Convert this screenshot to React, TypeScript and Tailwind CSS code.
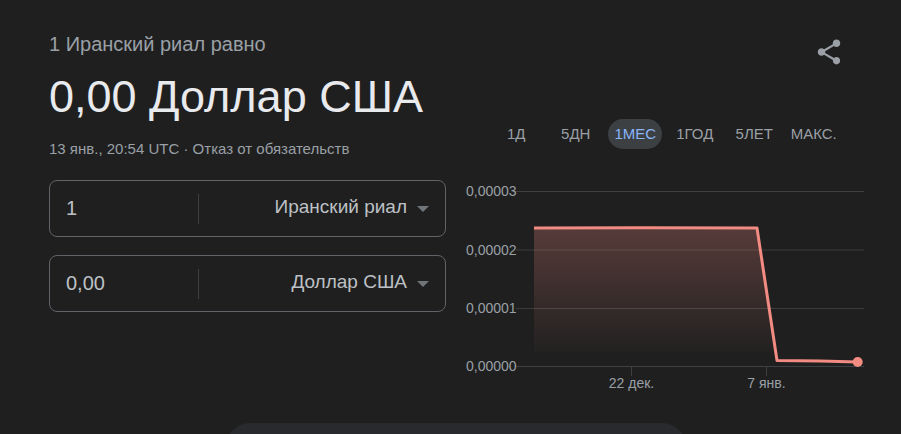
export default function App() {
  const tabs = ["1Д", "5ДН", "1МЕС", "1ГОД", "5ЛЕТ", "МАКС."];
  const yLabels = [
    { y: 191.5, t: "0,00003", c: "#3c4043" },
    { y: 250, t: "0,00002", c: "#3c3c3c" },
    { y: 308.5, t: "0,00001", c: "#3c3c3c" },
    { y: 366.5, t: "0,00000", c: "#3c4043" },
  ];
  const rows = [
    { v: "1", c: "Иранский риал" },
    { v: "0,00", c: "Доллар США" },
  ];
  return (
    <div className="w-[901px] h-[434px] overflow-hidden bg-[#1f1f1f] font-['Liberation_Sans',Arial,sans-serif]">
      <div className="h-[423px] flex">
        <div className="w-[446px] pl-[49px] pt-[33px] shrink-0">
          <div className="text-[20px] leading-[22px] text-[#9aa0a6]">1 Иранский риал равно</div>
          <div className="mt-[16px] text-[45px] leading-[52px] text-[#e8eaed]">0,00 Доллар США</div>
          <div className="mt-[16px] text-[15px] leading-[20px] text-[#9aa0a6]">13 янв., 20:54 UTC · Отказ от обязательств</div>
          <div className="mt-[21px] flex flex-col gap-[18px]">
            {rows.map((r) => (
              <div key={r.c} className="h-[57px] border border-[#5f6368] rounded-[8px] flex items-center">
                <div className="w-[149px] h-[30px] border-r border-[#3c4043] pl-[16px] text-[20px] leading-[28px] text-[#bdc1c6]">{r.v}</div>
                <div className="flex-1 flex items-center justify-end text-[19px] text-[#bdc1c6]">
                  <span className="-mt-[2px]">{r.c}</span>
                  <span className="ml-[10px] mr-[16px] w-0 h-0 border-x-[6.5px] border-x-transparent border-t-[6.5px] border-t-[#70757a]" />
                </div>
              </div>
            ))}
          </div>
        </div>
        <div className="flex-1 flex flex-col">
          <div className="h-[119px] relative">
            <svg className="absolute left-[368px] top-[37px] w-[30px] h-[30px]" viewBox="0 0 24 24" fill="#9aa0a6">
              <path d="M18 16.08c-.76 0-1.44.3-1.96.77L8.91 12.7c.05-.23.09-.46.09-.7s-.04-.47-.09-.7l7.05-4.11c.54.5 1.25.81 2.04.81 1.66 0 3-1.34 3-3s-1.34-3-3-3-3 1.34-3 3c0 .24.04.47.09.7L8.04 9.81C7.5 9.31 6.79 9 6 9c-1.66 0-3 1.34-3 3s1.34 3 3 3c.79 0 1.5-.31 2.04-.81l7.12 4.16c-.05.21-.08.43-.08.65 0 1.61 1.31 2.92 2.92 2.92 1.61 0 2.92-1.31 2.92-2.92s-1.31-2.92-2.92-2.92z" />
            </svg>
          </div>
          <div className="flex pl-[40.5px] h-[30px]">
            {tabs.map((t) => (
              <div key={t} className="w-[59.5px] flex justify-center">
                <div className={t === "1МЕС" ? "w-[54px] h-[30px] rounded-full bg-[#3c4043] text-[#8ab4f8] text-[15px] leading-[30px] text-center" : "h-[30px] text-[#9aa0a6] text-[15px] leading-[30px] text-center whitespace-nowrap"}>{t}</div>
              </div>
            ))}
          </div>
          <svg className="mt-[31px] w-[455px] h-[220px] block" viewBox="446 180 455 220">
            <defs>
              <linearGradient id="area" x1="0" y1="0" x2="0" y2="1">
                <stop offset="0" stopColor="#f28b82" stopOpacity="0.26" />
                <stop offset="1" stopColor="#f28b82" stopOpacity="0" />
              </linearGradient>
            </defs>
            {yLabels.map((l) => (
              <g key={l.t}>
                <line x1="516" x2="864" y1={l.y} y2={l.y} stroke={l.c} strokeWidth="1" />
                <text x="466" y={l.y + 4.5} fontSize="14" fill="#9aa0a6">{l.t}</text>
              </g>
            ))}
            <line x1="631.5" x2="631.5" y1="367" y2="376" stroke="#3c4043" />
            <line x1="766.5" x2="766.5" y1="367" y2="376" stroke="#3c4043" />
            <text x="631.5" y="388" fontSize="14" fill="#9aa0a6" textAnchor="middle">22 дек.</text>
            <text x="766.5" y="388" fontSize="14" fill="#9aa0a6" textAnchor="middle">7 янв.</text>
            <path d="M534 228 L757 228 L777 360.5 L777 352 L534 352 Z" fill="url(#area)" />
            <path d="M534 228 L640 227.8 L757 228 L777 360.5 L820 361 L858 362" fill="none" stroke="#f28b82" strokeWidth="3" strokeLinejoin="round" />
            <circle cx="857.7" cy="362" r="5" fill="#f28b82" />
          </svg>
        </div>
      </div>
      <div className="ml-[226px] w-[460px] h-[48px] rounded-[24px] bg-[#292a2d]" />
    </div>
  );
}
